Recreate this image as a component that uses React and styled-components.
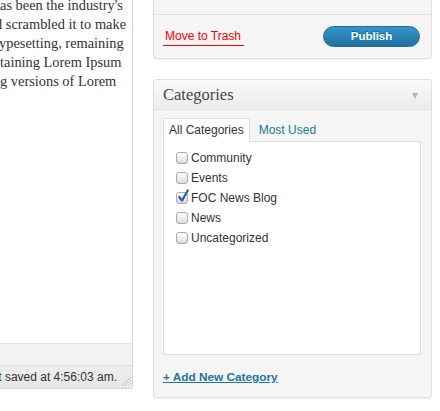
import React from 'react';
import styled, { createGlobalStyle } from 'styled-components';

const Global = createGlobalStyle`
  html, body { margin: 0; padding: 0; background: #fff; }
  body { width: 440px; height: 411px; overflow: hidden; font-family: "Liberation Sans", Arial, sans-serif; }
`;

const Page = styled.div`
  display: flex;
  align-items: flex-start;
  gap: 20px;
  width: 440px;
  height: 411px;
  overflow: hidden;
`;

const Editor = styled.div`
  flex: none;
  width: 132px;
  display: flex;
  flex-direction: column;
  border-right: 1px solid #d6d6d6;
  border-bottom: 1px solid #d6d6d6;
  border-bottom-right-radius: 3px;
  overflow: hidden;
`;

const EditorBody = styled.div`
  height: 343px;
  overflow: hidden;
  background: #fff;
  color: #333;
  font-family: "Liberation Serif", Georgia, serif;
  font-size: 14.4px;
  line-height: 19px;
`;

const EditorText = styled.div`
  margin-top: -4px;
`;

const Line = styled.div`
  white-space: nowrap;
  margin-left: ${p => p.$shift || 0}px;
`;

const PathBar = styled.div`
  height: 21px;
  border-top: 1px solid #e2e2e2;
  background: #f3f3f3;
`;

const StatusBar = styled.div`
  height: 22px;
  border-top: 1px solid #dcdcdc;
  background: linear-gradient(#eeeeee, #e6e6e6);
  display: flex;
  justify-content: flex-end;
  align-items: flex-end;
  gap: 4px;
  font-size: 12px;
  color: #333;
`;

const StatusText = styled.span`
  white-space: nowrap;
  line-height: 22px;
  align-self: center;
`;

const Grip = styled.svg`
  flex: none;
  width: 11px;
  height: 11px;
  margin-bottom: 1px;
`;

const Side = styled.div`
  flex: none;
  width: 279px;
  display: flex;
  flex-direction: column;
  gap: 20px;
`;

const Box = styled.div`
  border: 1px solid #dfdfdf;
  border-radius: 3px;
  background: #f5f5f5;
  box-shadow: 0 1px 1px rgba(0, 0, 0, 0.05);
  margin-top: ${p => p.$mt || 0}px;
`;

const MiscArea = styled.div`
  height: 34px;
`;

const Actions = styled.div`
  height: 43px;
  border-top: 1px solid #dfdfdf;
  display: flex;
  align-items: center;
  justify-content: space-between;
  padding: 0 11px 0 9px;
`;

const TrashLink = styled.a`
  color: #f00;
  font-size: 12px;
  line-height: 14px;
  text-decoration: none;
  padding: 1px 3px 2px 2px;
  border-bottom: 1px solid #f00;
`;

const PublishButton = styled.button`
  width: 97px;
  height: 21px;
  border-radius: 11px;
  border: 1px solid #1f6d98;
  background: linear-gradient(#3395cc, #21709f);
  color: #fff;
  font-family: "Liberation Sans", Arial, sans-serif;
  font-weight: bold;
  font-size: 11.5px;
  text-shadow: 0 -1px 0 rgba(0, 0, 0, 0.3);
  padding: 0;
  line-height: 19px;
`;

const Header = styled.div`
  height: 29px;
  border-bottom: 1px solid #dfdfdf;
  background: linear-gradient(#f9f9f9, #ececec);
  border-radius: 3px 3px 0 0;
  display: flex;
  align-items: center;
  justify-content: space-between;
  padding: 0 13px 0 9px;
`;

const Title = styled.h3`
  margin: 0;
  font-family: "Liberation Serif", Georgia, serif;
  font-weight: normal;
  font-size: 16.5px;
  color: #464646;
`;

const Arrow = styled.span`
  width: 0;
  height: 0;
  border-left: 3px solid transparent;
  border-right: 3px solid transparent;
  border-top: 6px solid #b4b4b4;
  margin-top: 2px;
`;

const CatBody = styled.div`
  padding: 8px 10px 0 9px;
`;

const Tabs = styled.div`
  display: flex;
  align-items: flex-end;
  margin-bottom: -1px;
  position: relative;
  z-index: 1;
`;

const Tab = styled.div`
  font-size: 12px;
  line-height: 23px;
  padding: 0 5px;
  border: 1px solid ${p => (p.$active ? '#dfdfdf' : 'transparent')};
  border-bottom: none;
  border-radius: 3px 3px 0 0;
  background: ${p => (p.$active ? '#fff' : 'transparent')};
  color: ${p => (p.$active ? '#333' : '#21759b')};
  margin-left: ${p => (p.$active ? 0 : 3)}px;
`;

const Panel = styled.div`
  box-sizing: border-box;
  height: 214px;
  border: 1px solid #dfdfdf;
  background: #fff;
  padding: 6px 0 0 12px;
`;

const Row = styled.label`
  display: flex;
  align-items: center;
  height: 20px;
  gap: 4px;
  font-size: 12px;
  color: #333;
`;

const Check = styled.span`
  position: relative;
  flex: none;
  box-sizing: border-box;
  width: 12px;
  height: 12px;
  margin-right: -1px;
  border: 1px solid #a9a9a9;
  border-radius: 3px;
  background: linear-gradient(#ffffff, #dcdcdc);
  box-shadow: inset 0 1px 0 #fff;
`;

const Tick = styled.svg`
  position: absolute;
  left: 0px;
  top: -4px;
  width: 12px;
  height: 14px;
`;

const AddLink = styled.a`
  display: block;
  padding: 14px 0 12px;
  line-height: 16px;
  font-size: 11.8px;
  font-weight: bold;
  color: #21759b;
  text-decoration: underline;
`;

const categories = [
  { name: 'Community' },
  { name: 'Events' },
  { name: 'FOC News Blog', checked: true },
  { name: 'News' },
  { name: 'Uncategorized' },
];

export default function App() {
  return (
    <>
      <Global />
      <Page>
        <Editor>
          <EditorBody>
            <EditorText>
              <Line $shift={0}>as been the industry's</Line>
              <Line $shift={-5}>d scrambled it to make</Line>
              <Line $shift={-1}>ypesetting, remaining</Line>
              <Line $shift={0}>taining Lorem Ipsum</Line>
              <Line $shift={0}>g versions of Lorem</Line>
            </EditorText>
          </EditorBody>
          <PathBar />
          <StatusBar>
            <StatusText>Draft saved at 4:56:03 am.</StatusText>
            <Grip viewBox="0 0 11 11">
              <g stroke="#b8b8b8" strokeWidth="1">
                <line x1="10" y1="1" x2="1" y2="10" />
                <line x1="10" y1="4" x2="4" y2="10" />
                <line x1="10" y1="7" x2="7" y2="10" />
              </g>
              <g stroke="#fff" strokeWidth="1">
                <line x1="11" y1="2" x2="2" y2="11" />
                <line x1="11" y1="5" x2="5" y2="11" />
                <line x1="11" y1="8" x2="8" y2="11" />
              </g>
            </Grip>
          </StatusBar>
        </Editor>
        <Side>
          <Box $mt={-21}>
            <MiscArea />
            <Actions>
              <TrashLink href="#">Move to Trash</TrashLink>
              <PublishButton>Publish</PublishButton>
            </Actions>
          </Box>
          <Box>
            <Header>
              <Title>Categories</Title>
              <Arrow />
            </Header>
            <CatBody>
              <Tabs>
                <Tab $active>All Categories</Tab>
                <Tab>Most Used</Tab>
              </Tabs>
              <Panel>
                {categories.map(c => (
                  <Row key={c.name}>
                    <Check>
                      {c.checked && (
                        <Tick viewBox="0 0 12 14">
                          <path d="M2.2 8 L5 11.6 L10.8 1.5" fill="none" stroke="#2a5fb0" strokeWidth="2.2" strokeLinecap="round" strokeLinejoin="round" />
                        </Tick>
                      )}
                    </Check>
                    {c.name}
                  </Row>
                ))}
              </Panel>
              <AddLink href="#">+ Add New Category</AddLink>
            </CatBody>
          </Box>
        </Side>
      </Page>
    </>
  );
}
